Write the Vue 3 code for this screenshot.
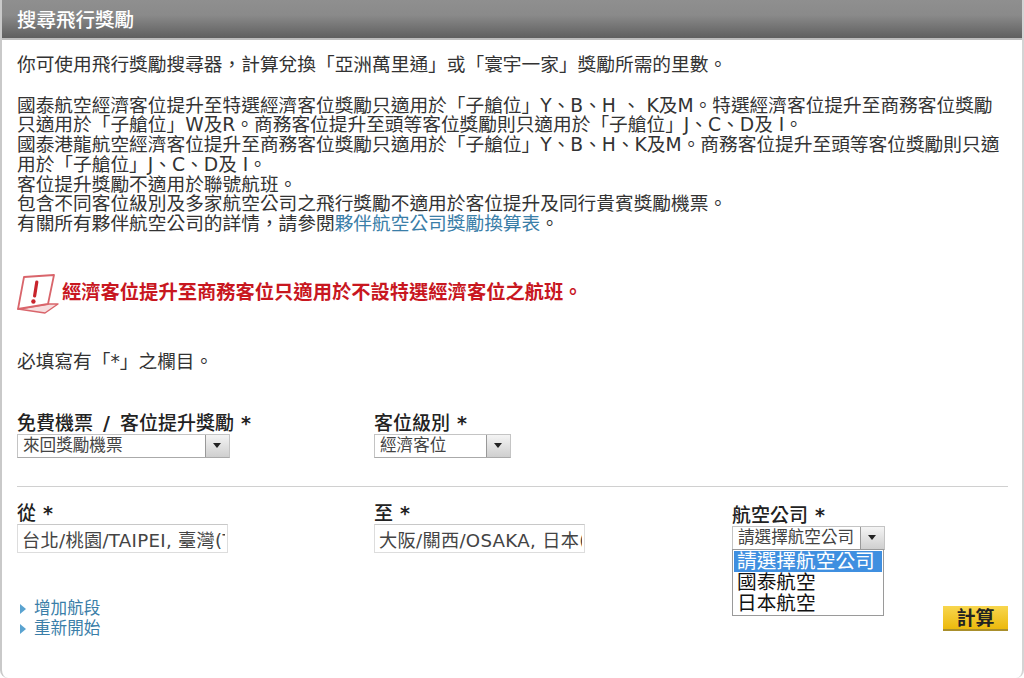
<script setup>
const airlines = ["請選擇航空公司", "國泰航空", "日本航空"];
</script>

<template>
  <div class="panel">
    <header class="panel__head">搜尋飛行獎勵</header>
    <main class="panel__body">
      <p class="intro">你可使用飛行獎勵搜尋器，計算兌換「亞洲萬里通」或「寰宇一家」獎勵所需的里數。</p>
      <p class="rules">
        國泰航空經濟客位提升至特選經濟客位獎勵只適用於「子艙位」Y、B、H 、 K及M。特選經濟客位提升至商務客位獎勵<br />
        只適用於「子艙位」W及R。商務客位提升至頭等客位獎勵則只適用於「子艙位」J、C、D及 I。<br />
        國泰港龍航空經濟客位提升至商務客位獎勵只適用於「子艙位」Y、B、H、K及M。商務客位提升至頭等客位獎勵則只適<br />
        用於「子艙位」J、C、D及 I。<br />
        客位提升獎勵不適用於聯號航班。<br />
        包含不同客位級別及多家航空公司之飛行獎勵不適用於客位提升及同行貴賓獎勵機票。<br />
        有關所有夥伴航空公司的詳情，請參閱<a class="link">夥伴航空公司獎勵換算表</a>。
      </p>

      <div class="alert">
        <svg class="alert__icon" width="44" height="40" viewBox="0 0 44 40">
          <path d="M1 35 L28 39 L41 30 L31 30 Z" fill="#f6dedf" stroke="#d9656b" stroke-width="1.4" stroke-linejoin="round" />
          <path d="M7 3 L37 1 L31 30 L1 35 Z" fill="#fff" stroke="#d9656b" stroke-width="1.8" stroke-linejoin="round" />
          <path d="M19.8 8 L17.6 22" stroke="#c8242c" stroke-width="3.2" stroke-linecap="round" />
          <circle cx="16.4" cy="27.5" r="2.2" fill="#c8242c" />
        </svg>
        <strong class="alert__text">經濟客位提升至商務客位只適用於不設特選經濟客位之航班。</strong>
      </div>

      <p class="required">必填寫有「*」之欄目。</p>

      <div class="fields fields--top">
        <div>
          <label class="field-label">免費機票 <b class="slash">/</b> 客位提升獎勵 <b>*</b></label>
          <div class="select select--trip">
            <span class="select__value">來回獎勵機票</span>
            <span class="select__btn"></span>
          </div>
        </div>
        <div>
          <label class="field-label">客位級別 <b>*</b></label>
          <div class="select select--cabin">
            <span class="select__value">經濟客位</span>
            <span class="select__btn"></span>
          </div>
        </div>
      </div>

      <hr class="divider" />

      <div class="fields">
        <div>
          <label class="field-label">從 <b>*</b></label>
          <input class="input" readonly value="台北/桃園/TAIPEI, 臺灣(TPE)" />
        </div>
        <div>
          <label class="field-label">至 <b>*</b></label>
          <input class="input" readonly value="大阪/關西/OSAKA, 日本(KIX)" />
        </div>
        <div class="airline">
          <label class="field-label">航空公司 <b>*</b></label>
          <div class="select select--airline">
            <span class="select__value">請選擇航空公司</span>
            <span class="select__btn"></span>
          </div>
          <ul class="listbox">
            <li
              v-for="(name, i) in airlines"
              :key="name"
              class="listbox__item"
              :class="{ 'listbox__item--active': i === 0 }"
            >{{ name }}</li>
          </ul>
        </div>
      </div>

      <div class="foot">
        <ul class="actions">
          <li class="actions__item"><span class="actions__arrow"></span><a class="link">增加航段</a></li>
          <li class="actions__item"><span class="actions__arrow"></span><a class="link">重新開始</a></li>
        </ul>
        <button class="calc">計算</button>
      </div>
    </main>
  </div>
</template>

<style>
html,
body {
  margin: 0;
  background: #fff;
}
</style>

<style scoped>
.panel {
  box-sizing: border-box;
  width: 1024px;
  height: 678px;
  overflow: hidden;
  border-left: 2px solid #c9c9c9;
  border-right: 2px solid #d4d4d4;
  border-bottom-left-radius: 8px;
  border-bottom-right-radius: 8px;
  font-family: "DejaVu Sans", "Noto Sans CJK TC", sans-serif;
  color: #333;
}

.panel__head {
  box-sizing: border-box;
  height: 40px;
  margin: 0 -2px;
  padding: 0 0 2px 17px;
  display: flex;
  align-items: center;
  background: linear-gradient(#8f8f8f, #8a8a8a 40%, #5f5f5f);
  border-bottom: 2px solid #bdbdbd;
  color: #fff;
  font-size: 19.5px;
  font-weight: 500;
}

.panel__body {
  padding: 15px 14px 0 15px;
  font-size: 18.7px;
  line-height: 19.7px;
}

p {
  margin: 0;
}

.rules {
  margin-top: 21px;
  white-space: nowrap;
}

.link {
  color: #3a7ea8;
}

.alert {
  display: flex;
  align-items: center;
  gap: 1px;
  margin-top: 39px;
  height: 40px;
}

.alert__icon {
  flex: none;
  margin-top: 2px;
}

.alert__text {
  color: #c8171f;
  font-size: 19.3px;
  font-weight: 700;
}

.required {
  margin-top: 39px;
}

.fields {
  display: grid;
  grid-template-columns: 357px 358px 1fr;
}

.fields--top {
  margin-top: 41px;
}

.field-label {
  display: block;
  height: 22px;
  font-size: 19px;
  line-height: 22px;
  word-spacing: 1px;
  color: #222;
  font-weight: 500;
}

.field-label b {
  font-weight: 700;
}

.field-label .slash {
  margin: 0 3px;
}

.select {
  box-sizing: border-box;
  display: flex;
  align-items: center;
  height: 24px;
  background: #fff;
  border: 1px solid #c4c4c4;
  border-bottom-color: #aaa;
  font-size: 16.6px;
  color: #444;
}

.select--trip {
  width: 213px;
}

.select--cabin {
  width: 137px;
}

.select--airline {
  width: 153px;
}

.select__value {
  flex: 1;
  padding-left: 5px;
  white-space: nowrap;
  overflow: hidden;
}

.select__btn {
  position: relative;
  flex: none;
  align-self: stretch;
  width: 23px;
  border-left: 1px solid #999;
  background: linear-gradient(#f4f4f4, #cfcfcf);
}

.select__btn::after {
  content: "";
  position: absolute;
  left: 7px;
  top: 8px;
  border: 4px solid transparent;
  border-top: 5px solid #222;
  border-bottom: 0;
}

.divider {
  margin: 28px 0 15px;
  border: 0;
  border-top: 1px solid #d0d0d0;
}

.input {
  display: block;
  box-sizing: border-box;
  width: 211px;
  height: 29px;
  padding: 0 2px 0 4px;
  background: #fff;
  border: 1px solid #ddd;
  border-top-color: #c8c8c8;
  border-radius: 0;
  outline: none;
  color: #444;
  font-family: inherit;
  font-size: 18.2px;
  letter-spacing: 0.3px;
  line-height: 27px;
}

.airline {
  position: relative;
  padding-top: 2px;
}

.listbox {
  position: absolute;
  top: 47px;
  left: 0;
  width: 152px;
  box-sizing: border-box;
  margin: 0;
  padding: 1px;
  list-style: none;
  background: #fff;
  border: 1px solid #9a9a9a;
  color: #111;
  font-size: 19.7px;
  line-height: 21px;
}

.listbox__item {
  padding-left: 3px;
  white-space: nowrap;
  overflow: hidden;
}

.listbox__item--active {
  background: #3f8fe0;
  color: #fff;
}

.foot {
  display: flex;
  justify-content: space-between;
  align-items: flex-start;
  margin-top: 46px;
}

.actions {
  margin: 0;
  padding: 0 0 0 3px;
  list-style: none;
}

.actions__item {
  display: flex;
  align-items: center;
  gap: 8px;
  height: 20px;
  font-size: 16.6px;
}

.actions__arrow {
  border: 5px solid transparent;
  border-left: 6px solid #5aa3d0;
  border-right: 0;
}

.calc {
  box-sizing: border-box;
  width: 65px;
  height: 25px;
  margin-top: 7px;
  padding: 0;
  border: 0;
  border-bottom: 2px solid #a98f2c;
  background: linear-gradient(#f8d64e, #ecb90d);
  color: #222;
  font-family: inherit;
  font-size: 19px;
  font-weight: 700;
  line-height: 22px;
}
</style>
